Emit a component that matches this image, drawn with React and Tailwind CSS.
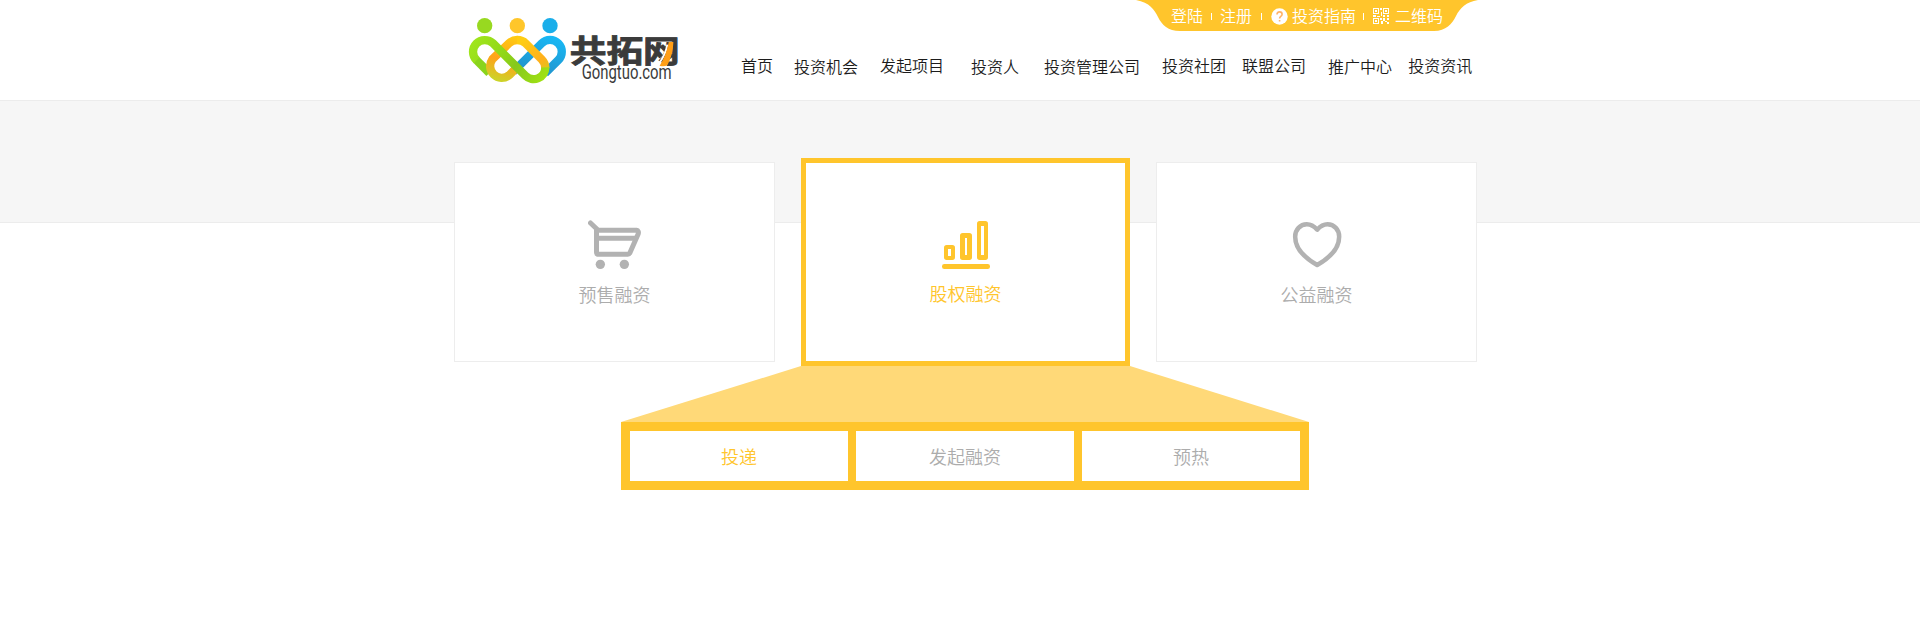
import React from 'react';

const NAV = [
  { label: '首页', cls: 'ml-[55px]' },
  { label: '投资机会', cls: 'ml-[21px] pt-px' },
  { label: '发起项目', cls: 'ml-[22px]' },
  { label: '投资人', cls: 'ml-[27px] pt-px' },
  { label: '投资管理公司', cls: 'ml-[25px] pt-px' },
  { label: '投资社团', cls: 'ml-[22px]' },
  { label: '联盟公司', cls: 'ml-[16px]' },
  { label: '推广中心', cls: 'ml-[22px] pt-px' },
  { label: '投资资讯', cls: 'ml-[16px]' },
];

function Logo() {
  return (
    <svg className="mt-[10px] h-[80px] w-[220px] shrink-0 overflow-visible" viewBox="18 30 660 240">
      <defs>
        <linearGradient id="lime" gradientUnits="userSpaceOnUse" x1="30" y1="110" x2="260" y2="250">
          <stop offset="0" stopColor="#a2e81c" />
          <stop offset="0.45" stopColor="#8fd518" />
          <stop offset="0.6" stopColor="#86c81c" />
          <stop offset="1" stopColor="#a3e512" />
        </linearGradient>
        <linearGradient id="amber" gradientUnits="userSpaceOnUse" x1="172" y1="108" x2="130" y2="250">
          <stop offset="0" stopColor="#ffcd12" />
          <stop offset="0.55" stopColor="#ffa319" />
          <stop offset="1" stopColor="#c9d62a" />
        </linearGradient>
        <linearGradient id="amberRight" gradientUnits="userSpaceOnUse" x1="190" y1="120" x2="258" y2="210">
          <stop offset="0" stopColor="#ffcd12" />
          <stop offset="0.7" stopColor="#ffb01c" />
          <stop offset="1" stopColor="#e0c41c" />
        </linearGradient>
        <linearGradient id="sky" gradientUnits="userSpaceOnUse" x1="290" y1="110" x2="250" y2="240">
          <stop offset="0" stopColor="#18b9f6" />
          <stop offset="1" stopColor="#2390c8" />
        </linearGradient>
      </defs>
      <circle cx="74" cy="77" r="23" fill="#98d920" />
      <circle cx="172" cy="77" r="23" fill="#ffc62a" />
      <circle cx="270" cy="77" r="23" fill="#1aaeea" />
      <g fill="none" strokeWidth="25">
        <path d="M160 215 L245 130 A35 35 0 0 1 295 180 L255 220" stroke="url(#sky)" />
        <path d="M88 219 L48 179" stroke="#8ad41c" />
        <path d="M172 201 L147 226 A35 35 0 0 1 97 178 L147 130 A35 35 0 0 1 172 120" stroke="url(#amber)" />
        <path d="M171 120 Q187 120 197 130 L245 178 Q256 189 256 204" stroke="url(#amberRight)" />
        <path d="M50 181 A35 35 0 0 1 99 130 L196 227 A35 35 0 0 0 256 202" stroke="url(#lime)" />
      </g>
      <g transform="translate(329 187) scale(1.18 1)">
        <text x="0" y="0" textLength="280" lengthAdjust="spacingAndGlyphs" fontSize="92" fontWeight="700" fill="#3b3b3b" stroke="#3b3b3b" strokeWidth="2.500" fontFamily="'Noto Sans CJK SC', sans-serif">共拓网</text>
      </g>
      <path d="M622 134 Q618 162 596 192" fill="none" stroke="#fff" strokeWidth="6" />
      <path d="M628 128 L638 128 Q637 164 621 193 Q614 198 602 196 Q620 168 628 128Z" fill="#ff9f18" stroke="#ff9f18" strokeWidth="4" />
      <text x="365" y="236" textLength="270" lengthAdjust="spacingAndGlyphs" fontSize="62" fill="#3b3b3b" stroke="#fff" strokeWidth="8" paintOrder="stroke" fontFamily="Roboto, sans-serif">Gongtuo.com</text>
    </svg>
  );
}

function Tick({ className }) {
  return <i className={'h-[7px] w-px bg-white ' + className} />;
}

function TopBar() {
  return (
    <div className="absolute top-0 left-[682px] h-8 w-[342px]">
      <svg className="absolute inset-0" width="342" height="32" viewBox="0 0 342 32">
        <path d="M0 0 C14 3 18 9 22 17 C26 25 32 31 44 31 H298 C310 31 316 24 320 16 C324 8 330 2 342 0Z" fill="#ffc52c" />
      </svg>
      <div className="relative flex h-8 items-center pl-[35px] text-[16px] leading-8 font-[350] whitespace-nowrap text-white">
        <span className="-mt-[2px] w-8">登陆</span>
        <Tick className="ml-[8px]" />
        <span className="-mt-[2px] ml-[8px] w-8">注册</span>
        <Tick className="ml-[9px]" />
        <svg className="ml-[9px]" width="17" height="17" viewBox="0 0 17 17">
          <circle cx="8.5" cy="8.5" r="8.2" fill="#fff" />
          <path d="M6 6.6 Q6 3.9 8.6 3.9 Q11.1 3.9 11.1 6.2 Q11.1 7.5 9.8 8.4 Q8.6 9.2 8.6 10.6 M8.6 12 V13.6" fill="none" stroke="#ffb469" strokeWidth="1.6" />
        </svg>
        <span className="-mt-[2px] ml-[4px] w-16">投资指南</span>
        <Tick className="ml-[7px]" />
        <svg className="ml-[9px]" width="17" height="17" viewBox="0 0 17 17" shapeRendering="crispEdges">
          <g fill="none" stroke="#fff">
            <path d="M.5 .5h5v5h-5zM10.5 .5h5v5h-5zM.5 10.5h5v5h-5z" />
          </g>
          <path d="M2 2h2v2H2zM12 2h2v2h-2zM2 12h2v2H2zM7 0h2v2H7zM8 4h1v4H8zM0 7h3v2H0zM4 8h3v1H4zM10 7h2v2h-2zM14 7h2v2h-2zM7 10h2v2H7zM10 10h2v3h-2zM14 10h2v2h-2zM8 13h2v3H8zM12 13h2v1h-2zM14 14h2v2h-2z" fill="#fff" />
        </svg>
        <span className="-mt-[2px] ml-[5px]">二维码</span>
      </div>
    </div>
  );
}

function CartIcon() {
  return (
    <svg width="54" height="50" viewBox="443.500 210 162 150">
      <g fill="none" stroke="currentColor" strokeWidth="15" strokeLinecap="round" strokeLinejoin="round">
        <path d="M451 219 L470 237" />
        <path d="M469 241 H589 Q597 242 594 252 L569 309 Q567 313 563 313 H475 Q469 313 469 307Z" />
        <path d="M475 265 H584" />
      </g>
      <circle cx="480.500" cy="343" r="14" fill="currentColor" />
      <circle cx="552.500" cy="343" r="14" fill="currentColor" />
    </svg>
  );
}

function BarsIcon() {
  return (
    <svg width="54" height="50" viewBox="447 210 162 150">
      <g fill="currentColor">
        <path fillRule="evenodd" d="M470 285H487Q495 285 495 293V322Q495 330 487 330H470Q462 330 462 322V293Q462 285 470 285ZM474 297V318H483V297Z" />
        <path fillRule="evenodd" d="M518 249H538Q546 249 546 257V322Q546 330 538 330H518Q510 330 510 322V257Q510 249 518 249ZM525 264V315H531V264Z" />
        <path fillRule="evenodd" d="M569 213H586Q594 213 594 221V322Q594 330 586 330H569Q561 330 561 322V221Q561 213 569 213ZM573 228V315H582V228Z" />
        <rect x="456" y="342" width="144" height="15" rx="7" />
      </g>
    </svg>
  );
}

function HeartIcon() {
  return (
    <svg width="54" height="50" viewBox="449.500 210 162 150">
      <path d="M531 239 C522 229 512 223 500 223 C480 223 465 239 465 260 C465 296 496 325 531 345 C566 325 597 296 597 260 C597 239 582 223 562 223 C550 223 540 229 531 239Z" fill="none" stroke="currentColor" strokeWidth="13.500" strokeLinejoin="round" />
    </svg>
  );
}

function Card({ icon, label }) {
  return (
    <div className="mt-1 flex h-[200px] w-[321px] flex-col items-center border border-[#ededed] bg-white pt-[57px] text-[#b2b2b2]">
      {icon}
      <span className="mt-[11px] text-[18px] leading-[26px] font-[350] text-[#acacac]">{label}</span>
    </div>
  );
}

export default function App() {
  return (
    <div className="min-h-[635px] w-full bg-white font-['Noto_Sans_CJK_SC',sans-serif]">
      <header className="relative mx-auto flex h-[100px] w-[1012px]">
        <div className="relative flex w-[1024px] shrink-0">
          <div className="flex pl-[12px]">
            <Logo />
            <nav className="flex pt-[53px] text-[16px] leading-6 font-[350] whitespace-nowrap text-[#1c1c1c]">
              {NAV.map((n) => (
                <a key={n.label} className={n.cls}>{n.label}</a>
              ))}
            </nav>
          </div>
          <TopBar />
        </div>
      </header>
      <div className="h-[123px] border-y border-[#ececec] bg-[#f6f6f6]" />
      <main className="-mt-[65px] ml-[454px] w-[1023px]">
        <div className="relative flex items-start justify-between">
          <Card icon={<CartIcon />} label="预售融资" />
          <div className="flex h-[208px] w-[329px] flex-col items-center border-[5px] border-[#ffc52c] bg-white pt-[57px] text-[#ffc52c]">
            <BarsIcon />
            <span className="mt-[10px] text-[18px] leading-[26px] font-[350]">股权融资</span>
          </div>
          <Card icon={<HeartIcon />} label="公益融资" />
        </div>
        <svg className="ml-[167px] block" width="688" height="56" viewBox="0 0 688 56">
          <path d="M180 0H509L688 56H0Z" fill="#ffd978" />
        </svg>
        <div className="ml-[167px] flex h-[68px] w-[688px] gap-2 bg-[#ffc52c] p-[9px] text-center text-[18px] leading-[50px] font-[350] text-[#acacac]">
          <div className="w-[218px] bg-white text-[#ffc52c]">投递</div>
          <div className="w-[218px] bg-white">发起融资</div>
          <div className="w-[218px] bg-white">预热</div>
        </div>
      </main>
    </div>
  );
}
